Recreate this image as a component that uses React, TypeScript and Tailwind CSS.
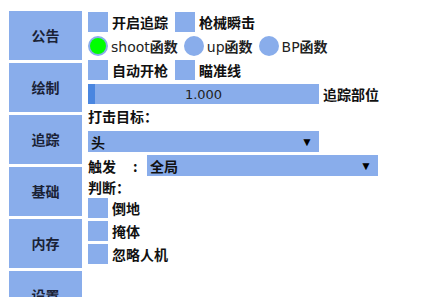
const tabs = ["公告", "绘制", "追踪", "基础", "内存", "设置"];

const cjk = "font-['Noto_Sans_CJK_SC',sans-serif] font-bold";

function Box({ label }: { label: string }) {
  return (
    <div className="flex items-center gap-[4px]">
      <div className="w-[20px] h-[20px] bg-[#89adeb]" />
      <span className={`${cjk} text-[14px] leading-none text-[#111]`}>{label}</span>
    </div>
  );
}

function Radio({ latin, checked }: { latin: string; checked?: boolean }) {
  return (
    <div className="flex items-center gap-[3px]">
      <div className="w-[20px] h-[20px] rounded-full bg-[#89adeb] flex items-center justify-center">
        {checked && <div className="w-[16px] h-[16px] rounded-full bg-[#00ff00]" />}
      </div>
      <span className="font-['DejaVu_Sans',sans-serif] text-[14px] leading-none text-[#222]">
        {latin}
        <span className={cjk}>函数</span>
      </span>
    </div>
  );
}

function Select({ value, width }: { value: string; width: string }) {
  return (
    <div className={`${width} h-[21px] bg-[#89adeb] flex items-center justify-between pl-[3px] pr-[6px]`}>
      <span className={`${cjk} text-[14px] leading-none text-[#111]`}>{value}</span>
      <span className="text-[12px] leading-none text-black">▼</span>
    </div>
  );
}

export default function App() {
  return (
    <div className="w-[431px] h-[297px] bg-white overflow-hidden flex">
      {/* sidebar */}
      <div className="pl-[9px] pt-[11px] flex flex-col gap-[3px]">
        {tabs.map((t) => (
          <div
            key={t}
            className={`w-[73px] h-[49px] shrink-0 bg-[#89adeb] flex items-center justify-center ${cjk} text-[14px] text-[#1a2236]`}
          >
            {t}
          </div>
        ))}
      </div>

      {/* content */}
      <div className="ml-[6px] pt-[12px] flex flex-col">
        <div className="flex gap-[7px]">
          <Box label="开启追踪" />
          <Box label="枪械瞬击" />
        </div>
        <div className="mt-[4px] flex gap-[6px]">
          <Radio latin="shoot" checked />
          <Radio latin="up" />
          <Radio latin="BP" />
        </div>
        <div className="mt-[4px] flex gap-[7px]">
          <Box label="自动开枪" />
          <Box label="瞄准线" />
        </div>
        <div className="mt-[4px] flex items-center gap-[4px]">
          <div className="w-[231px] h-[20px] bg-[#89adeb] relative flex items-center justify-center">
            <div className="absolute left-0 top-0 w-[7px] h-full bg-[#4a86e0]" />
            <span className="font-['DejaVu_Sans',sans-serif] text-[13px] leading-none text-[#222]">1.000</span>
          </div>
          <span className={`${cjk} text-[14px] leading-none text-[#111]`}>追踪部位</span>
        </div>
        <div className={`h-[27px] flex items-center pb-[2px] ${cjk} text-[14px] text-[#111]`}>打击目标：</div>
        <Select value="头" width="w-[231px]" />
        <div className="mt-[3px] flex items-center">
          <span className={`${cjk} text-[14px] leading-none text-[#111] w-[59px] shrink-0`}>
            触发<span className="ml-[17px]">:</span>
          </span>
          <Select value="全局" width="w-[231px]" />
        </div>
        <div className={`h-[22px] flex items-center ${cjk} text-[14px] text-[#111]`}>判断：</div>
        <div className="flex flex-col gap-[3px]">
          <Box label="倒地" />
          <Box label="掩体" />
          <Box label="忽略人机" />
        </div>
      </div>
    </div>
  );
}
